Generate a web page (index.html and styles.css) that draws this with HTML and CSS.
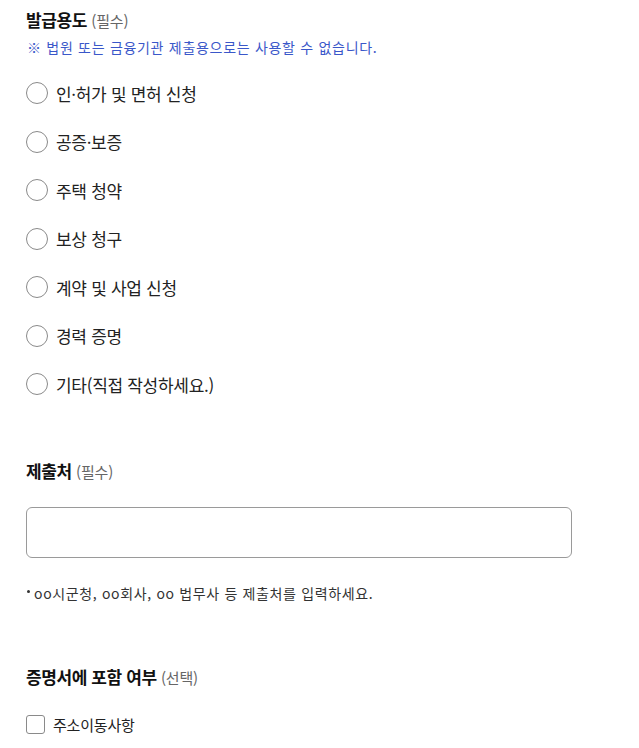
FILE: index.html
```html
<!DOCTYPE html>
<html lang="ko">
<head>
<meta charset="utf-8">
<link rel="stylesheet" href="styles.css">
</head>
<body>
<div class="form">
  <section class="group">
    <h2 class="label">발급용도 <span class="req">(필수)</span></h2>
    <p class="notice">※ 법원 또는 금융기관 제출용으로는 사용할 수 없습니다.</p>
    <ul class="radios">
      <li class="radio"><span class="circle"></span><span>인·허가 및 면허 신청</span></li>
      <li class="radio"><span class="circle"></span><span>공증·보증</span></li>
      <li class="radio"><span class="circle"></span><span>주택 청약</span></li>
      <li class="radio"><span class="circle"></span><span>보상 청구</span></li>
      <li class="radio"><span class="circle"></span><span>계약 및 사업 신청</span></li>
      <li class="radio"><span class="circle"></span><span>경력 증명</span></li>
      <li class="radio"><span class="circle"></span><span>기타(직접 작성하세요.)</span></li>
    </ul>
  </section>
  <section class="group g2">
    <h2 class="label">제출처 <span class="req">(필수)</span></h2>
    <div class="input"></div>
    <p class="help"><span class="dot"></span>oo시군청, oo회사, oo 법무사 등 제출처를 입력하세요.</p>
  </section>
  <section class="group g3">
    <h2 class="label">증명서에 포함 여부 <span class="req">(선택)</span></h2>
    <div class="check"><span class="box"></span><span>주소이동사항</span></div>
  </section>
</div>
</body>
</html>
```
FILE: styles.css
```css
html, body { margin: 0; padding: 0; background: #fff; }
body {
  font-family: "Noto Sans CJK KR", "Noto Sans", sans-serif;
  color: #222;
}
.form { padding: 8px 0 0 26px; width: 546px; }
.group { margin: 0; }
.label {
  margin: 0;
  font-size: 17px;
  line-height: 24px;
  font-weight: 700;
  color: #111;
  letter-spacing: -0.4px;
}
.req { font-weight: 400; font-size: 15px; color: #666; letter-spacing: -0.2px; }
.notice {
  margin: 3px 0 0 1px;
  font-size: 14px;
  line-height: 22px;
  color: #3a57c9;
  letter-spacing: 0.7px;
}
.radios { list-style: none; margin: 10.75px 0 0; padding: 0; }
.radio {
  display: flex;
  align-items: center;
  height: 48.5px;
  font-size: 17px;
  color: #222;
  letter-spacing: -0.3px;
}
.circle {
  width: 20px; height: 20px;
  border: 1.3px solid #8a8a8a;
  border-radius: 50%;
  margin-right: 8px;
  flex: none;
}
.g2 { margin-top: 50.75px; }
.input {
  margin-top: 23px;
  height: 49px;
  border: 1px solid #9a9a9a;
  border-radius: 6px;
}
.help {
  margin: 25px 0 0 1px;
  font-size: 14px;
  line-height: 20px;
  color: #333;
  display: flex;
  align-items: center;
  letter-spacing: 0.65px;
}
.dot {
  width: 3px; height: 3px; border-radius: 50%;
  background: #333; margin-right: 4px; align-self: flex-start; margin-top: 7px;
}
.g3 { margin-top: 62px; }
.check {
  margin-top: 22px;
  display: flex;
  align-items: center;
  height: 24px;
  font-size: 15px;
  color: #222;
  letter-spacing: -0.2px;
}
.box {
  width: 17px; height: 17px;
  border: 1.3px solid #8a8a8a;
  border-radius: 3px;
  margin-right: 8px;
  flex: none;
}
```
